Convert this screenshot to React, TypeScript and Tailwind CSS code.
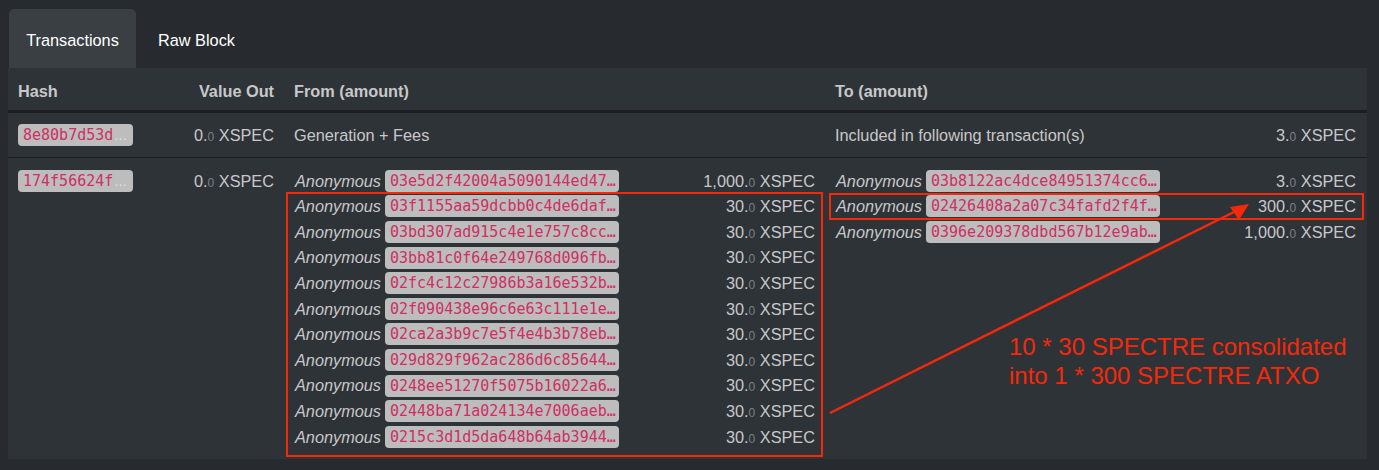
import React from 'react';

const fromRows = [
  { hash: '03e5d2f42004a5090144ed47…', amount: '1,000' },
  { hash: '03f1155aa59dcbb0c4de6daf…', amount: '30' },
  { hash: '03bd307ad915c4e1e757c8cc…', amount: '30' },
  { hash: '03bb81c0f64e249768d096fb…', amount: '30' },
  { hash: '02fc4c12c27986b3a16e532b…', amount: '30' },
  { hash: '02f090438e96c6e63c111e1e…', amount: '30' },
  { hash: '02ca2a3b9c7e5f4e4b3b78eb…', amount: '30' },
  { hash: '029d829f962ac286d6c85644…', amount: '30' },
  { hash: '0248ee51270f5075b16022a6…', amount: '30' },
  { hash: '02448ba71a024134e7006aeb…', amount: '30' },
  { hash: '0215c3d1d5da648b64ab3944…', amount: '30' },
];

const toRows = [
  { hash: '03b8122ac4dce84951374cc6…', amount: '3' },
  { hash: '02426408a2a07c34fafd2f4f…', amount: '300' },
  { hash: '0396e209378dbd567b12e9ab…', amount: '1,000' },
];

const mono = "font-['DejaVu_Sans_Mono',monospace]";

function Amount({ value }: { value: string }) {
  return (
    <span className="whitespace-nowrap">
      {value}.<span className="text-[12px] text-[#7a8288]">0</span> XSPEC
    </span>
  );
}

function HashBadge({ text }: { text: string }) {
  return (
    <span
      className={`${mono} inline-block w-[115px] h-[22px] leading-[22px] rounded-[4px] bg-[#bdbdbd] pl-[5px] text-[15px] text-[#cf2f63] whitespace-nowrap overflow-hidden`}
    >
      {text}
      <span className="font-['Liberation_Sans',sans-serif] text-[#dedede] pl-[1px]">...</span>
    </span>
  );
}

function AddrLine({ hash, amount }: { hash: string; amount: string }) {
  return (
    <div className="flex items-center h-[25.6px]">
      <span className="italic w-[90px] shrink-0">Anonymous</span>
      <span
        className={`${mono} w-[234px] shrink-0 h-[22px] leading-[22px] rounded-[4px] bg-[#bdbdbd] pl-[5px] text-[15px] text-[#cf2f63] whitespace-nowrap overflow-hidden`}
      >
        {hash}
      </span>
      <span className="flex-1 text-right">
        <Amount value={amount} />
      </span>
    </div>
  );
}

export default function App() {
  return (
    <div className="relative w-[1379px] h-[470px] overflow-hidden bg-[#272b30] font-['Liberation_Sans',Arial,sans-serif] text-[16.3px] text-[#c8c8c8]">
      {/* tabs */}
      <div className="flex h-[68px] pt-[9px] pl-[9px]">
        <div className="w-[127px] rounded-t-[5px] bg-[#3a3f44] flex items-center justify-center pt-[4px] text-white">
          Transactions
        </div>
        <div className="flex items-center pl-[22px] pt-[4px] text-white">Raw Block</div>
      </div>

      {/* table */}
      <div className="ml-[8px] w-[1359px] bg-[#2e3338]">
        <div className="flex h-[45px] items-center border-b-[3px] border-[#1c1e22] pt-[4px] font-bold">
          <div className="w-[140px] pl-[10px]">Hash</div>
          <div className="w-[134px] text-right pr-[8px]">Value Out</div>
          <div className="w-[545px] pl-[12px]">From (amount)</div>
          <div className="w-[540px] pl-[8px]">To (amount)</div>
        </div>

        <div className="flex h-[45px] items-center border-b border-[#1c1e22]">
          <div className="w-[140px] pl-[10px] flex">
            <HashBadge text="8e80b7d53d" />
          </div>
          <div className="w-[134px] text-right pr-[8px]">
            <Amount value="0" />
          </div>
          <div className="w-[545px] pl-[12px]">Generation + Fees</div>
          <div className="w-[540px] pl-[8px] pr-[11px] flex">
            <span className="flex-1">Included in following transaction(s)</span>
            <Amount value="3" />
          </div>
        </div>

        <div className="flex items-start pt-[10px] h-[301px]">
          <div className="w-[140px] pl-[10px] h-[25.6px] flex items-center">
            <HashBadge text="174f56624f" />
          </div>
          <div className="w-[134px] text-right pr-[8px] h-[25.6px] flex items-center justify-end">
            <Amount value="0" />
          </div>
          <div className="w-[545px] pl-[13px] pr-[12px]">
            {fromRows.map((r) => (
              <AddrLine key={r.hash} hash={r.hash} amount={r.amount} />
            ))}
          </div>
          <div className="w-[540px] pl-[9px] pr-[11px]">
            {toRows.map((r) => (
              <AddrLine key={r.hash} hash={r.hash} amount={r.amount} />
            ))}
          </div>
        </div>
      </div>

      {/* annotation overlay */}
      <div className="absolute left-[286px] top-[192px] w-[537px] h-[265px] border-2 border-[#f5290a]" />
      <div className="absolute left-[829px] top-[193px] w-[535px] h-[27px] border-2 border-[#f5290a]" />
      <svg className="absolute left-0 top-0" width="1379" height="470">
        <line x1="830" y1="413" x2="1236" y2="211" stroke="#f5290a" strokeWidth="2.5" />
        <polygon points="1249,204 1230,207 1239,220" fill="#f5290a" />
      </svg>
      <div className="absolute left-[1009px] top-[332px] text-[24px] leading-[29px] text-[#f5290a]">
        10 * 30 SPECTRE consolidated
        <br />
        into 1 * 300 SPECTRE ATXO
      </div>
    </div>
  );
}
